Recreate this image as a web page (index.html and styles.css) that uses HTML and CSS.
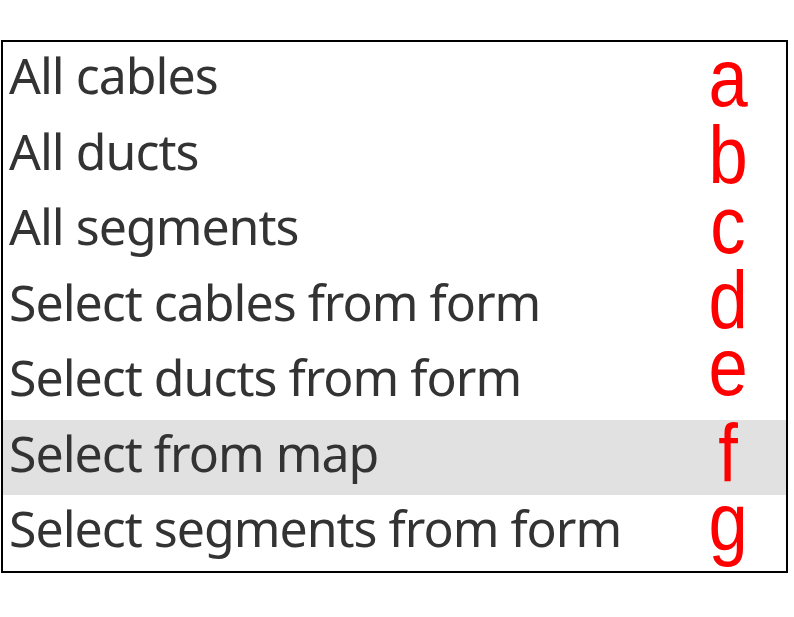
FILE: index.html
```html
<!DOCTYPE html>
<html lang="en">
<head>
    <meta charset="UTF-8">
    <meta name="viewport" content="width=device-width, initial-scale=1.0">
    <link rel="stylesheet" href="styles.css">
    <title>Selection list</title>
</head>
<body>
    <div class="select-list">
        <div class="option"><span class="option-text">All cables</span><span class="tag tag-a">a</span></div>
        <div class="option"><span class="option-text">All ducts</span><span class="tag tag-b">b</span></div>
        <div class="option"><span class="option-text">All segments</span><span class="tag tag-c">c</span></div>
        <div class="option"><span class="option-text">Select cables from form</span><span class="tag tag-d">d</span></div>
        <div class="option"><span class="option-text">Select ducts from form</span><span class="tag tag-e">e</span></div>
        <div class="option selected"><span class="option-text">Select from map</span><span class="tag tag-f">f</span></div>
        <div class="option"><span class="option-text">Select segments from form</span><span class="tag tag-g">g</span></div>
    </div>
</body>
</html>
```

FILE: styles.css
```css
body {
    margin: 0;
    padding: 0;
    background: #fff;
}

.select-list {
    margin: 40px 0 0 1px;
    width: 787px;
    height: 533px;
    box-sizing: border-box;
    border: 2.5px solid #000;
    display: grid;
    grid-template-rows: repeat(7, 1fr);
}

.option {
    position: relative;
    display: flex;
    align-items: flex-start;
    padding-left: 6px;
}

.option.selected {
    background-color: #e1e1e1;
}

.option-text {
    font-family: "Noto Sans", "Open Sans", sans-serif;
    font-size: 50px;
    line-height: 50px;
    letter-spacing: -1px;
    margin-top: 8px;
    color: #333;
}

/* red annotation letters */
.tag {
    position: absolute;
    left: 700px;
    width: 50px;
    text-align: center;
    font-family: "Liberation Sans", Arial, sans-serif;
    font-size: 82px;
    line-height: 60px;
    color: #f00;
    transform: scaleX(0.86);
    top: 0;
}

.tag-a { top: 6px; }
.tag-b { top: 7px; }
.tag-c { top: 2px; }
.tag-d { top: 1px; }
.tag-e { top: -7px; }
.tag-f { top: 3px; }
.tag-g { top: -3px; }
```
